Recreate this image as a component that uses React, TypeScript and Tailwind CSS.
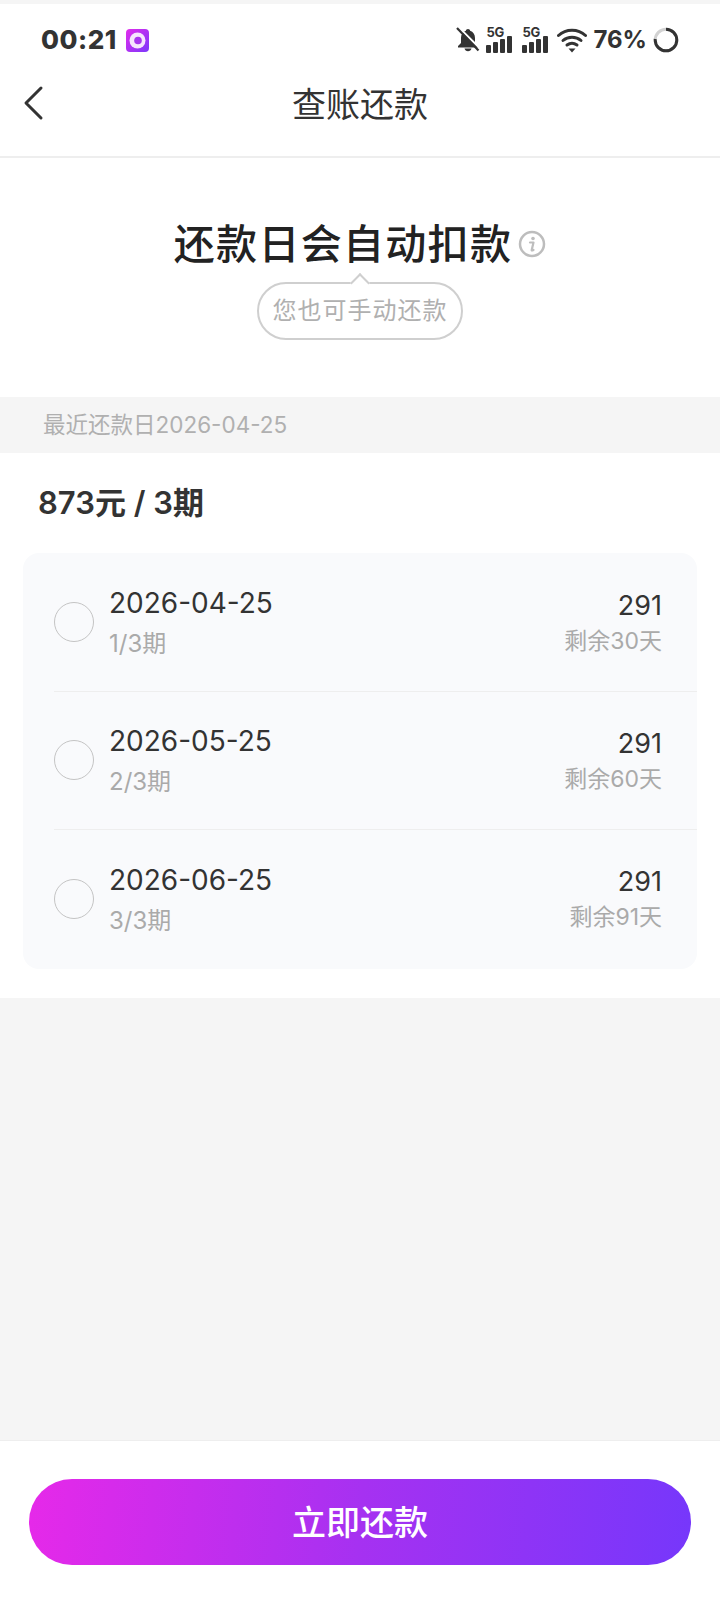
const FONT = 'font-["Inter","Noto_Sans_CJK_SC",sans-serif]';

const bills = [
  { date: '2026-04-25', term: '1/3期', left: '剩余30天' },
  { date: '2026-05-25', term: '2/3期', left: '剩余60天' },
  { date: '2026-06-25', term: '3/3期', left: '剩余91天' },
];

// ── Status bar icons ──────────────────────────────────────────────────────────

function AppBadge() {
  return (
    <svg width="23" height="23" viewBox="0 0 23 23" aria-hidden="true">
      <defs>
        <linearGradient id="badge" x1="0" y1="0" x2="1" y2="1">
          <stop offset="0" stopColor="#e22cec" />
          <stop offset="1" stopColor="#7c38fb" />
        </linearGradient>
      </defs>
      <rect width="23" height="23" rx="4" fill="url(#badge)" />
      <circle cx="11.5" cy="11.5" r="8" fill="#f6e6fd" />
      <circle cx="12" cy="11.5" r="3.8" fill="#a836ee" />
    </svg>
  );
}

function BellOff() {
  return (
    <svg width="24" height="26" viewBox="0 0 24 26" aria-hidden="true" fill="#333">
      <path d="M12 2c-1.200 0-2 .8-2.100 1.800C6.800 4.800 5 7.500 5 11v5l-3 3v1.500h20V19l-3-3v-5c0-3.500-1.800-6.200-4.900-7.200C14 2.800 13.200 2 12 2Z" />
      <path d="M8.500 21.500h7c-.3 1.600-1.800 2.700-3.500 2.700s-3.200-1.100-3.500-2.700Z" />
      <path d="M3 0.500 24.500 22" stroke="#fff" strokeWidth="2" />
      <path d="M1 1 22.500 23.500" stroke="#333" strokeWidth="2.200" />
    </svg>
  );
}

function Signal() {
  return (
    <div className="flex h-[26px] w-[28px] flex-col items-start">
      <span className="text-[13px] leading-[10px] font-bold tracking-[-0.3px] text-[#333]">5G</span>
      <div className="-mt-px flex items-end gap-[2px]">
        <div className="h-[8px] w-[5px] rounded-[1px] bg-[#333]" />
        <div className="h-[11px] w-[5px] rounded-[1px] bg-[#333]" />
        <div className="h-[14px] w-[5px] rounded-[1px] bg-[#333]" />
        <div className="h-[17px] w-[5px] rounded-[1px] bg-[#333]" />
      </div>
    </div>
  );
}

function Wifi() {
  return (
    <svg width="30" height="26" viewBox="0 0 30 26" fill="none" aria-hidden="true">
      <path d="M1.500 8.500C9 1.500 21 1.500 28.500 8.500" stroke="#333" strokeWidth="3" strokeLinecap="round" />
      <path d="M6 13.500C11 9 19 9 24 13.500" stroke="#333" strokeWidth="3" strokeLinecap="round" />
      <path d="M10 18C13 15.800 17 15.800 20 18" stroke="#333" strokeWidth="3" strokeLinecap="round" />
      <path d="M11.500 21.500h7L15 25.500Z" fill="#333" />
    </svg>
  );
}

function BatteryRing() {
  return (
    <svg width="26" height="26" viewBox="0 0 26 26" fill="none" aria-hidden="true">
      <circle cx="13" cy="13" r="10.800" stroke="#d2d2d2" strokeWidth="3" />
      <circle
        cx="13"
        cy="13"
        r="10.800"
        stroke="#333"
        strokeWidth="3"
        strokeDasharray="51.600 67.900"
        transform="rotate(-90 13 13)"
      />
    </svg>
  );
}

function BackArrow() {
  return (
    <svg width="22" height="36" viewBox="0 0 22 36" fill="none" aria-hidden="true">
      <path d="M19 3 4 18l15 15" stroke="#333" strokeWidth="3" strokeLinecap="round" strokeLinejoin="round" />
    </svg>
  );
}

function InfoIcon() {
  return (
    <svg width="28" height="28" viewBox="0 0 28 28" fill="none" aria-hidden="true">
      <circle cx="14" cy="14" r="12" stroke="#bdbdbd" strokeWidth="2.500" />
      <circle cx="15" cy="8.500" r="1.800" fill="#bdbdbd" />
      <path d="M12 12.500h3.500l-1.800 7.500c-.1.500.3.700 1.800 0" stroke="#bdbdbd" strokeWidth="2.200" strokeLinecap="round" strokeLinejoin="round" />
    </svg>
  );
}

// ── Page ──────────────────────────────────────────────────────────────────────

export default function App() {
  return (
    <div className={`flex h-[1600px] w-[720px] flex-col overflow-hidden bg-[#f5f5f5] text-[#333] ${FONT}`}>
      <div className="mt-[4px] bg-white">
        {/* Status bar */}
        <div className="flex h-[66px] items-center justify-between pt-[6px] pr-[41px] pl-[41px]">
          <div className="flex items-center gap-[9px]">
            <span className="text-[26px] leading-none font-extrabold tracking-[0.5px] text-[#333]">00:21</span>
            <AppBadge />
          </div>
          <div className="flex items-center">
            <BellOff />
            <div className="ml-[6px] flex gap-[8px]">
              <Signal />
              <Signal />
            </div>
            <div className="ml-[7px]">
              <Wifi />
            </div>
            <span className="ml-[6px] text-[24px] leading-none font-bold text-[#333]">76%</span>
            <div className="ml-[6px]">
              <BatteryRing />
            </div>
          </div>
        </div>

        {/* Nav */}
        <div className="relative flex h-[88px] items-center justify-center border-b-2 border-[#eeeeee] pb-[16px]">
          <div className="absolute top-[15px] left-[22px]">
            <BackArrow />
          </div>
          <span className="text-[34px] leading-none text-[#333]">查账还款</span>
        </div>
      </div>

      {/* Hero */}
      <div className="flex h-[239px] flex-col items-center bg-white pt-[58px]">
        <div className="flex items-center gap-[6px]">
          <span className="text-[41px] leading-[56px] font-medium tracking-[1.300px] text-[#222]">还款日会自动扣款</span>
          <InfoIcon />
        </div>
        <div className="relative mt-[10px] flex h-[58px] w-[206px] items-center justify-center rounded-full border-2 border-[#cfcfcf] bg-white">
          <div className="absolute -top-[8px] left-[94px] h-[14px] w-[14px] rotate-45 border-t-2 border-l-2 border-[#cfcfcf] bg-white" />
          <span className="relative text-[24px] leading-none tracking-[1px] text-[#b0b0b0]">您也可手动还款</span>
        </div>
      </div>

      {/* Due date band */}
      <div className="flex h-[56px] items-center pl-[43px] text-[22.5px] text-[#b0b0b0]">最近还款日2026-04-25</div>

      {/* Bill list */}
      <div className="bg-white px-[23px] pb-[29px]">
        <div className="flex h-[100px] items-center pl-[15px] text-[31px] font-semibold text-[#333]">873元 / 3期</div>
        <div className="rounded-[16px] bg-[#f9fafc] py-px">
          {bills.map((bill, i) => (
            <div key={bill.date} className="pl-[31px]">
              <div className={`flex h-[138px] items-center pr-[35px] ${i < 2 ? 'border-b border-[#eeeeee]' : ''}`}>
                <div className="-mt-px h-[40px] w-[40px] rounded-full border border-[#c4c4c4]" />
                <div className="ml-[15px] flex flex-col pt-[3px]">
                  <span className="text-[28px] leading-[40px] text-[#333]">{bill.date}</span>
                  <span className="text-[24px] leading-[42px] text-[#aaaaaa]">{bill.term}</span>
                </div>
                <div className="ml-auto flex flex-col items-end pb-[2px]">
                  <span className="text-[27px] leading-[38px] text-[#333]">291</span>
                  <span className="text-[23px] leading-[32px] text-[#aaaaaa]">{bill.left}</span>
                </div>
              </div>
            </div>
          ))}
        </div>
      </div>

      <div className="flex-1" />

      {/* Footer */}
      <div className="flex h-[160px] justify-center border-t border-[#eeeeee] bg-white pt-[38px]">
        <button className="flex h-[86px] w-[662px] items-center justify-center rounded-full bg-[linear-gradient(95deg,#e629e9,#a631f1_50%,#7637fb)] text-[34px] font-medium text-white">
          立即还款
        </button>
      </div>
    </div>
  );
}
